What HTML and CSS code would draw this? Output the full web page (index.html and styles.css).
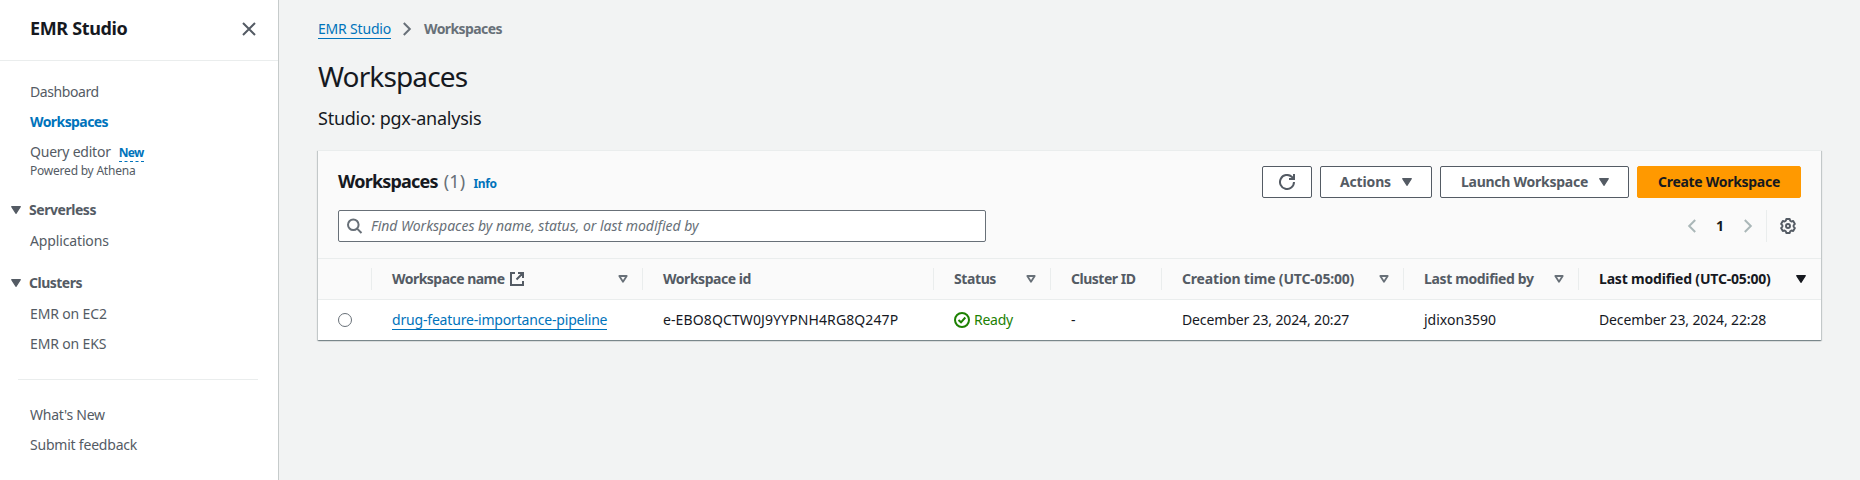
FILE: index.html
```
<!DOCTYPE html>
<html lang="en">
<head>
<meta charset="utf-8">
<title>Workspaces - EMR Studio</title>
<link rel="stylesheet" href="styles.css">
</head>
<body>
<div class="app">
  <aside class="sidebar">
    <header class="sidebar-header">
      <h2 class="sidebar-title">EMR Studio</h2>
      <svg class="icon" width="16" height="16" viewBox="0 0 16 16"><path d="M2 2l12 12M14 2L2 14" fill="none" stroke="#545b64" stroke-width="2"/></svg>
    </header>
    <nav class="nav">
      <a class="nav-link t-dash">Dashboard</a>
      <a class="nav-link nav-active">Workspaces</a>
      <div class="nav-query"><a class="nav-link t-query">Query editor</a><span class="nav-new">New</span></div>
      <span class="nav-sub">Powered by Athena</span>
      <div class="nav-section"><svg width="10" height="8" viewBox="0 0 10 8"><path d="M.7.7h8.6L5 7.3z" fill="#545b64" stroke="#545b64" stroke-width="1.2" stroke-linejoin="round"/></svg><span class="t-serverless">Serverless</span></div>
      <a class="nav-link t-tight">Applications</a>
      <div class="nav-section"><svg width="10" height="8" viewBox="0 0 10 8"><path d="M.7.7h8.6L5 7.3z" fill="#545b64" stroke="#545b64" stroke-width="1.2" stroke-linejoin="round"/></svg><span class="t-clusters">Clusters</span></div>
      <a class="nav-link t-tight">EMR on EC2</a>
      <a class="nav-link t-tight">EMR on EKS</a>
      <hr class="nav-divider">
      <a class="nav-link t-query">What's New</a>
      <a class="nav-link t-feedback">Submit feedback</a>
    </nav>
  </aside>
  <main class="main">
    <div class="breadcrumbs">
      <a class="crumb-link">EMR Studio</a>
      <svg width="10" height="14" viewBox="0 0 10 14"><path d="M1.8 1l6 6-6 6" fill="none" stroke="#687078" stroke-width="2"/></svg>
      <span class="crumb-current">Workspaces</span>
    </div>
    <h1 class="page-title">Workspaces</h1>
    <p class="studio">Studio: pgx-analysis</p>
    <section class="card">
      <div class="card-header">
        <div class="card-heading"><h2 class="card-title">Workspaces</h2><span class="count">(1)</span><a class="info">Info</a></div>
        <div class="actions">
          <button class="btn btn-refresh" aria-label="Refresh"><svg width="16" height="16" viewBox="0 0 16 16"><path d="M15 8a7 7 0 1 1-2.3-5.2L15 5M10 5h5V0" fill="none" stroke="#545b64" stroke-width="2"/></svg></button>
          <button class="btn btn-actions"><span>Actions</span><svg width="10" height="8" viewBox="0 0 10 8"><path d="M.7.7h8.6L5 7.3z" fill="#545b64" stroke="#545b64" stroke-width="1.2" stroke-linejoin="round"/></svg></button>
          <button class="btn btn-launch"><span>Launch Workspace</span><svg width="10" height="8" viewBox="0 0 10 8"><path d="M.7.7h8.6L5 7.3z" fill="#545b64" stroke="#545b64" stroke-width="1.2" stroke-linejoin="round"/></svg></button>
          <button class="btn btn-create">Create Workspace</button>
        </div>
      </div>
      <div class="tools">
        <div class="search">
          <svg width="16" height="16" viewBox="0 0 16 16"><circle cx="6.3" cy="6.8" r="5.3" fill="none" stroke="#687078" stroke-width="2"/><path d="M10.1 10.6L14.500 15" stroke="#687078" stroke-width="2"/></svg>
          <span class="placeholder">Find Workspaces by name, status, or last modified by</span>
        </div>
        <div class="pager">
          <svg width="10" height="14" viewBox="0 0 10 14"><path d="M8.2 1l-6 6 6 6" fill="none" stroke="#aab7b8" stroke-width="2"/></svg>
          <span class="page-number">1</span>
          <svg width="10" height="14" viewBox="0 0 10 14"><path d="M1.8 1l6 6-6 6" fill="none" stroke="#aab7b8" stroke-width="2"/></svg>
          <div class="settings"><svg width="16" height="16" viewBox="0 0 16 16" fill="none" stroke="#545b64" stroke-linejoin="round"><path stroke-width="1.9" d="M6.3 1h3.4l.5 1.8 1.2.7 1.8-.5 1.7 2.9-1.3 1.4v1.4l1.3 1.4-1.7 2.9-1.8-.5-1.2.7-.5 1.8H6.3l-.5-1.8-1.2-.7-1.8.5-1.7-2.9 1.3-1.4V7.300L1.100 5.900 2.800 3l1.800.5 1.200-.7z"/><circle cx="8" cy="8" r="2" stroke-width="1.9"/></svg></div>
        </div>
      </div>
      <div class="row head">
        <div class="cell"></div>
        <div class="cell"><span class="t-name">Workspace name</span><svg class="external" width="16" height="16" viewBox="0 0 16 16"><path d="M6 2H2v12h12v-4M9 2h5v5M14 2L7.500 8.500" fill="none" stroke="#545b64" stroke-width="2"/></svg><svg class="sort" width="10" height="8" viewBox="0 0 10 8"><path d="M1.300 1h7.400L5 6.700z" fill="none" stroke="#687078" stroke-width="1.800" stroke-linejoin="round"/></svg></div>
        <div class="cell"><span class="t-id">Workspace id</span></div>
        <div class="cell"><span class="t-status">Status</span><svg class="sort" width="10" height="8" viewBox="0 0 10 8"><path d="M1.300 1h7.400L5 6.700z" fill="none" stroke="#687078" stroke-width="1.800" stroke-linejoin="round"/></svg></div>
        <div class="cell"><span class="t-cluster">Cluster ID</span></div>
        <div class="cell"><span class="t-time">Creation time (UTC-05:00)</span><svg class="sort" width="10" height="8" viewBox="0 0 10 8"><path d="M1.300 1h7.400L5 6.700z" fill="none" stroke="#687078" stroke-width="1.800" stroke-linejoin="round"/></svg></div>
        <div class="cell"><span class="t-by">Last modified by</span><svg class="sort" width="10" height="8" viewBox="0 0 10 8"><path d="M1.300 1h7.400L5 6.700z" fill="none" stroke="#687078" stroke-width="1.800" stroke-linejoin="round"/></svg></div>
        <div class="cell sorted"><span class="t-time">Last modified (UTC-05:00)</span><svg class="sort" width="10" height="8" viewBox="0 0 10 8"><path d="M.7.7h8.6L5 7.3z" fill="#16191f" stroke="#16191f" stroke-width="1.2" stroke-linejoin="round"/></svg></div>
      </div>
      <div class="row body">
        <div class="cell"><span class="radio"></span></div>
        <div class="cell"><a class="name-link">drug-feature-importance-pipeline</a></div>
        <div class="cell"><span class="v-id">e-EBO8QCTW0J9YYPNH4RG8Q247P</span></div>
        <div class="cell ready"><svg width="16" height="16" viewBox="0 0 16 16" fill="none" stroke="#1d8102" stroke-width="2"><circle cx="8" cy="8" r="7"/><path d="M4.500 8l2.500 2.300L11.300 5.500"/></svg><span>Ready</span></div>
        <div class="cell">-</div>
        <div class="cell"><span class="v-date">December 23, 2024, 20:27</span></div>
        <div class="cell">jdixon3590</div>
        <div class="cell"><span class="v-date">December 23, 2024, 22:28</span></div>
      </div>
    </section>
  </main>
</div>
</body>
</html>
```
FILE: styles.css
```
* { box-sizing: border-box; }
body { margin: 0; background: #f2f3f3; color: #16191f; font: 14px/22px "Noto Sans", "Open Sans", sans-serif; }
h1, h2, p { margin: 0; }
svg { display: block; flex: none; }
.app { display: grid; grid-template-columns: 279px 1fr; height: 480px; overflow: hidden; }

/* Side navigation */
.sidebar { background: #fff; border-right: 1px solid #c6cbcb; color: #545b64; }
.sidebar-header { display: flex; align-items: center; justify-content: space-between; height: 61px; padding: 0 21px 3px 30px; border-bottom: 1px solid #eaeded; }
.sidebar-title { padding-bottom: 2px; font-size: 18px; font-weight: 700; line-height: 22px; letter-spacing: -.35px; color: #16191f; }
.nav { display: flex; flex-direction: column; padding: 20px 0 0 30px; }
.nav-link { display: block; margin-bottom: 8px; }
.nav-active { color: #0073bb; font-weight: 700; letter-spacing: -.58px; }
.nav-query { display: flex; gap: 8px; height: 22px; }
.nav-new { height: 21px; border-bottom: 1px dashed #0073bb; color: #0073bb; font-size: 12px; font-weight: 700; letter-spacing: -.65px; line-height: 24px; }
.nav-sub { font-size: 12px; line-height: 16px; letter-spacing: -.22px; }
.nav-section { display: flex; align-items: center; gap: 8px; height: 22px; margin: 20px 0 9px -19px; font-weight: 700; }
.nav-link + .nav-section { margin-top: 12px; }
.nav-divider { width: 240px; height: 1px; margin: 16px 0 24px -12px; border: 0; background: #eaeded; }
.t-dash { letter-spacing: -.42px; }
.t-query { letter-spacing: -.23px; }
.t-tight { letter-spacing: -.14px; }
.t-feedback { letter-spacing: -.21px; }
.t-serverless { letter-spacing: -.45px; }
.t-clusters { letter-spacing: -.5px; }

/* Page heading */
.main { padding: 18px 39px 0; }
.breadcrumbs { display: flex; align-items: flex-start; height: 22px; }
.breadcrumbs svg { margin: 4px 12px 0 11px; }
.crumb-link { height: 21px; border-bottom: 1px solid #0073bb; color: #0073bb; letter-spacing: -.19px; }
.crumb-current { color: #687078; font-weight: 700; letter-spacing: -.6px; }
.page-title { margin-top: 18px; font-size: 28px; font-weight: 400; line-height: 36px; letter-spacing: -.87px; }
.studio { margin-top: 12px; font-size: 18px; line-height: 24px; letter-spacing: -.24px; }

/* Table card */
.card { width: 1503px; height: 190px; margin-top: 20px; border-top: 1px solid #eaeded; background: #fff; box-shadow: 0 1px 1px 0 rgba(0,28,36,.3), 1px 1px 1px 0 rgba(0,28,36,.15), -1px 1px 1px 0 rgba(0,28,36,.15); }
.card-header { display: flex; justify-content: space-between; height: 47px; padding: 15px 20px 0; background: #fafafa; }
.card-heading { display: flex; align-items: baseline; line-height: 30px; height: 32px; }
.card-title { font-size: 18px; font-weight: 700; letter-spacing: -.8px; }
.count { margin-left: 6px; color: #687078; font-size: 18px; letter-spacing: .2px; }
.info { margin-left: 8px; color: #0073bb; font-size: 12px; font-weight: 700; letter-spacing: -.4px; }
.actions { display: flex; gap: 8px; }
.btn { display: flex; align-items: center; justify-content: space-between; height: 32px; padding: 0 19px 0 20px; border: 1px solid #545b64; border-radius: 2px; background: #fff; color: #545b64; font: 700 14px/22px "Noto Sans", sans-serif; }
.btn-refresh { width: 50px; padding: 0 16px; }
.btn-actions { width: 112px; padding-left: 19px; letter-spacing: -.15px; }
.btn-launch { width: 189px; letter-spacing: -.26px; }
.btn-create { width: 164px; justify-content: center; padding: 0; border-color: #ff9900; background: #ff9900; color: #16191f; letter-spacing: -.29px; }
.tools { display: flex; justify-content: space-between; height: 60px; padding: 12px 20px 16px; background: #fafafa; }
.search { display: flex; align-items: center; width: 648px; height: 32px; padding-left: 8px; border: 1px solid #687078; border-radius: 2px; background: #fff; }
.placeholder { margin-left: 8px; color: #687078; font-style: italic; letter-spacing: -.02px; }
.pager { display: flex; align-items: center; height: 32px; }
.page-number { width: 46px; text-align: center; font-weight: 700; }
.settings { display: flex; align-items: center; height: 32px; margin-left: 13px; padding: 0 5px 0 13px; border-left: 1px solid #eaeded; }
.row { display: grid; grid-template-columns: 54px 271px 291px 117px 111px 242px 175px 242px; }
.head { height: 42px; border: 1px solid #eaeded; border-width: 1px 0; background: #fafafa; color: #545b64; font-weight: 700; }
.head .cell { display: flex; align-items: center; height: 22px; margin: 9px 0; padding: 0 14px 0 20px; border-right: 1px solid #eaeded; line-height: 22px; }
.head .cell:last-child { padding-right: 15px; border-right: 0; }
.head .sort { margin-left: auto; }
.external { margin-left: 4px; }
.sorted { color: #16191f; }
.body { height: 40px; align-items: center; }
.body .cell { display: flex; align-items: center; padding-left: 20px; }
.radio { width: 14px; height: 14px; border: 1px solid #687078; border-radius: 50%; }
.name-link { height: 21px; margin-bottom: 2px; border-bottom: 1px solid #0073bb; color: #0073bb; letter-spacing: -.18px; }
.ready { gap: 4px; color: #1d8102; letter-spacing: -.24px; }
.t-name { letter-spacing: -.53px; }
.t-id { letter-spacing: -.46px; }
.t-status { letter-spacing: -.4px; }
.t-cluster { letter-spacing: -.48px; }
.t-time { letter-spacing: -.18px; }
.t-by { letter-spacing: -.36px; }
.v-id { letter-spacing: .11px; }
.v-date { letter-spacing: -.13px; }
```
